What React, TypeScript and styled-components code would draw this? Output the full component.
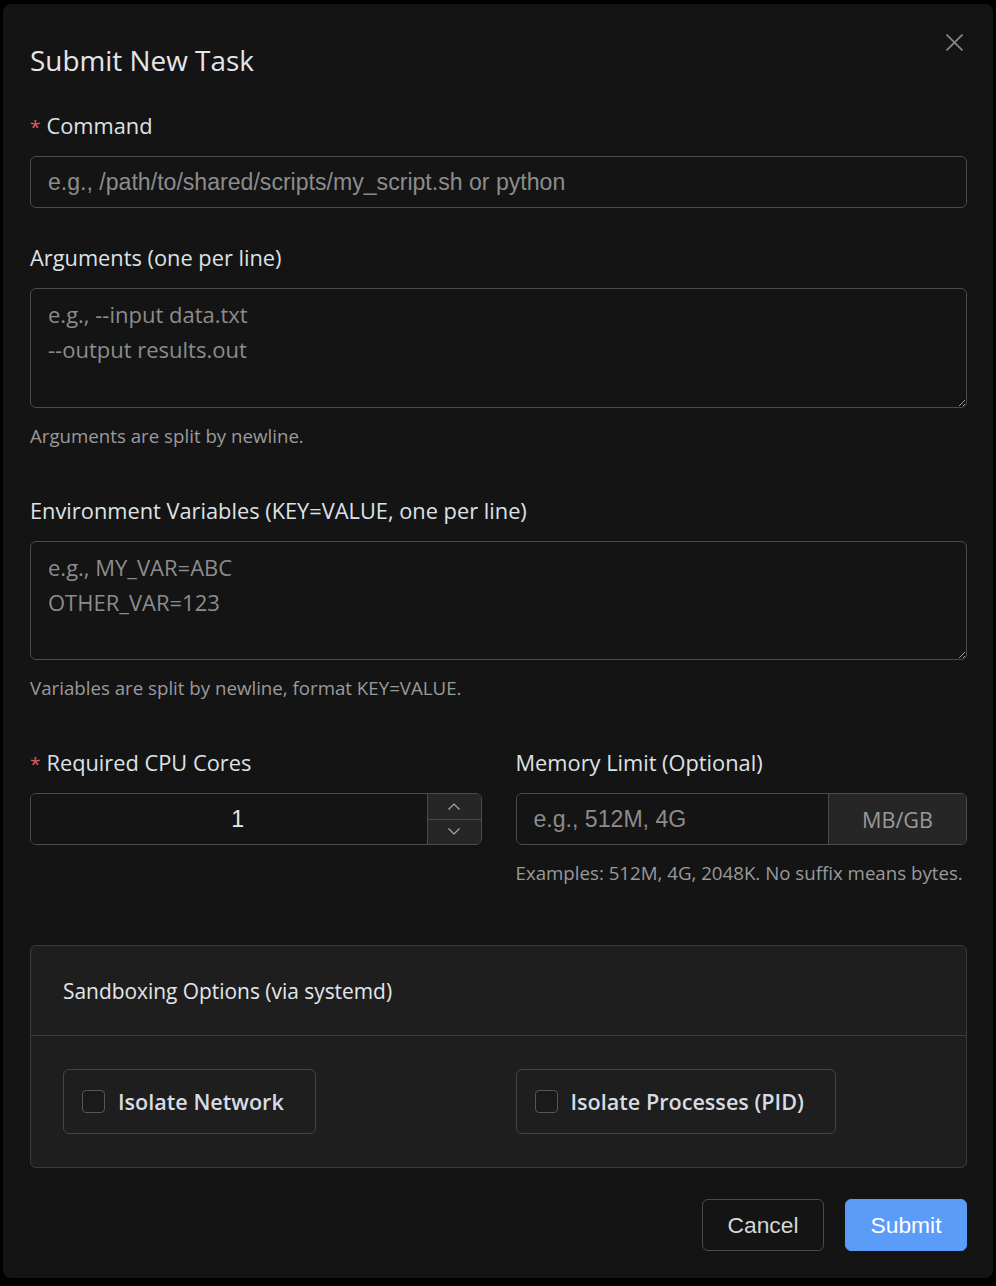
import React from "react";
import styled, { createGlobalStyle } from "styled-components";

const Global = createGlobalStyle`
  html, body { margin: 0; padding: 0; background: #000; }
  body { font-family: "Open Sans", "Noto Sans", sans-serif; }
  * { box-sizing: border-box; }
`;

const UI = `"Open Sans", "Noto Sans", sans-serif`;
const ARIAL = `"Liberation Sans", Arial, sans-serif`;

const Page = styled.div`
  width: 996px;
  height: 1286px;
  padding: 4px 3px 0 3px;
  background: #000;
`;

const Modal = styled.div`
  position: relative;
  width: 990px;
  height: 1274px;
  background: #141414;
  border-radius: 8px;
  padding: 0 26px 0 27px;
  display: flex;
  flex-direction: column;
`;

const Header = styled.div`
  height: 106px;
  display: flex;
  align-items: center;
  padding-top: 8px;
`;

const Title = styled.h2`
  margin: 0;
  font-family: ${UI};
  font-weight: 400;
  font-size: 27.9px;
  color: #e4e6ea;
  line-height: 1.2;
`;

const Close = styled.button`
  position: absolute;
  top: 26px;
  right: 27px;
  width: 24px;
  height: 24px;
  padding: 0;
  border: none;
  background: transparent;
  display: flex;
  align-items: center;
  justify-content: center;
  cursor: pointer;
`;

const Field = styled.div<{ $mb?: number }>`
  display: flex;
  flex-direction: column;
  min-width: 0;
  margin-bottom: ${(p) => p.$mb ?? 34}px;
`;

const Label = styled.label`
  font-family: ${UI};
  font-size: 21.8px;
  line-height: 32px;
  height: 32px;
  color: #dee2e6;
  margin-bottom: 14px;
  white-space: nowrap;
`;

const Req = styled.span`
  color: #e35d5d;
  margin-right: 6px;
  font-size: 19px;
`;

const TextInput = styled.input`
  height: 52px;
  width: 100%;
  background: #141414;
  border: 1.5px solid #4b4b4b;
  border-radius: 6px;
  padding: 0 17px;
  font-family: ${ARIAL};
  font-size: 23.1px;
  color: #e6e6e6;
  outline: none;
  &::placeholder { color: #8c8c8c; }
`;

const TextArea = styled.textarea<{ $h: number }>`
  height: ${(p) => p.$h}px;
  width: 100%;
  background: #141414;
  border: 1.5px solid #4b4b4b;
  border-radius: 6px;
  padding: 8px 17px;
  font-family: ${UI};
  font-size: 22px;
  line-height: 35px;
  color: #e6e6e6;
  outline: none;
  resize: vertical;
  &::placeholder { color: #8c8c8c; }
`;

const Help = styled.div`
  font-family: ${UI};
  font-size: 18.7px;
  line-height: 28px;
  color: #9a9a9a;
  margin-top: 14px;
  margin-bottom: 11px;
  white-space: nowrap;
`;

const Row = styled.div`
  display: grid;
  grid-template-columns: minmax(0, 1fr) minmax(0, 1fr);
  column-gap: 34px;
  margin-bottom: 47px;
  align-items: start;
`;

const Group = styled.div`
  display: flex;
  height: 52px;
  border: 1.5px solid #4b4b4b;
  border-radius: 6px;
  overflow: hidden;
`;

const GroupInput = styled.input<{ $center?: boolean }>`
  flex: 1;
  min-width: 0;
  background: #141414;
  border: none;
  padding: ${(p) => (p.$center ? "0 8px 0 26px" : "0 17px")};
  font-family: ${ARIAL};
  font-size: 23.1px;
  color: #e8e8e8;
  text-align: ${(p) => (p.$center ? "center" : "left")};
  outline: none;
  &::placeholder { color: #8c8c8c; }
`;

const Spinner = styled.div`
  width: 54px;
  display: flex;
  flex-direction: column;
  border-left: 1.5px solid #4b4b4b;
  background: #262626;
`;

const SpinBtn = styled.button<{ $top?: boolean }>`
  flex: 1;
  border: none;
  background: transparent;
  padding: 0;
  display: flex;
  align-items: center;
  justify-content: center;
  border-bottom: ${(p) => (p.$top ? "1.5px solid #4b4b4b" : "none")};
  cursor: pointer;
`;

const Addon = styled.div`
  width: 138px;
  display: flex;
  align-items: center;
  justify-content: center;
  background: #262626;
  border-left: 1.5px solid #4b4b4b;
  font-family: ${UI};
  font-size: 21.6px;
  color: #9a9a9a;
`;

const Card = styled.div`
  border: 1.5px solid #3c3c3c;
  border-radius: 6px;
  background: #1e1e1e;
  margin-bottom: 31px;
`;

const CardHeader = styled.div`
  height: 90px;
  display: flex;
  align-items: center;
  padding: 0 32px;
  border-bottom: 1.5px solid #3c3c3c;
  font-family: ${UI};
  font-size: 20.9px;
  color: #e4e6ea;
`;

const CardBody = styled.div`
  padding: 33px 32px;
  display: grid;
  grid-template-columns: minmax(0, 1fr) minmax(0, 1fr);
  column-gap: 34px;
`;

const Option = styled.label`
  justify-self: start;
  height: 65px;
  display: flex;
  align-items: center;
  gap: 13px;
  padding: 0 31px 0 18px;
  border: 1.5px solid #444;
  border-radius: 6px;
  cursor: pointer;
`;

const Box = styled.span`
  width: 23px;
  height: 23px;
  border: 1.5px solid #555;
  border-radius: 4px;
  background: #1a1a1a;
`;

const OptionText = styled.span`
  font-family: ${UI};
  font-weight: 600;
  font-size: 21.6px;
  color: #d9dbe2;
  white-space: nowrap;
`;

const Footer = styled.div`
  display: flex;
  justify-content: flex-end;
  gap: 21px;
`;

const Button = styled.button<{ $primary?: boolean }>`
  width: 122px;
  height: 52px;
  border-radius: 6px;
  border: 1.5px solid ${(p) => (p.$primary ? "#5b9cf9" : "#4b4b4b")};
  background: ${(p) => (p.$primary ? "#5b9cf9" : "#141414")};
  color: ${(p) => (p.$primary ? "#fff" : "#d6d6d6")};
  font-family: ${ARIAL};
  font-size: 22.8px;
  cursor: pointer;
`;

const Chevron = ({ up }: { up?: boolean }) => (
  <svg width="12" height="7" viewBox="0 0 12 7" fill="none">
    <path
      d={up ? "M0.5 6.5L6 1L11.5 6.5" : "M0.5 0.5L6 6L11.5 0.5"}
      stroke="#a8a8a8"
      strokeWidth="1.2"
    />
  </svg>
);

export default function App() {
  return (
    <Page>
      <Global />
      <Modal>
        <Header>
          <Title>Submit New Task</Title>
        </Header>
        <Close aria-label="Close">
          <svg width="17" height="17" viewBox="0 0 17 17">
            <path d="M0.5 0.5L16.5 16.5M16.5 0.5L0.5 16.5" stroke="#8a8a8a" strokeWidth="1.6" />
          </svg>
        </Close>

        <Field>
          <Label>
            <Req>*</Req>Command
          </Label>
          <TextInput placeholder="e.g., /path/to/shared/scripts/my_script.sh or python" />
        </Field>

        <Field $mb={34}>
          <Label>Arguments (one per line)</Label>
          <TextArea $h={120} placeholder={"e.g., --input data.txt\n--output results.out"} />
          <Help>Arguments are split by newline.</Help>
        </Field>

        <Field $mb={34}>
          <Label>Environment Variables (KEY=VALUE, one per line)</Label>
          <TextArea $h={119} placeholder={"e.g., MY_VAR=ABC\nOTHER_VAR=123"} />
          <Help>Variables are split by newline, format KEY=VALUE.</Help>
        </Field>

        <Row>
          <Field $mb={0}>
            <Label>
              <Req>*</Req>Required CPU Cores
            </Label>
            <Group>
              <GroupInput $center defaultValue="1" />
              <Spinner>
                <SpinBtn $top aria-label="Increase">
                  <Chevron up />
                </SpinBtn>
                <SpinBtn aria-label="Decrease">
                  <Chevron />
                </SpinBtn>
              </Spinner>
            </Group>
          </Field>
          <Field $mb={0}>
            <Label>Memory Limit (Optional)</Label>
            <Group>
              <GroupInput placeholder="e.g., 512M, 4G" />
              <Addon>MB/GB</Addon>
            </Group>
            <Help>Examples: 512M, 4G, 2048K. No suffix means bytes.</Help>
          </Field>
        </Row>

        <Card>
          <CardHeader>Sandboxing Options (via systemd)</CardHeader>
          <CardBody>
            <Option>
              <Box />
              <OptionText>Isolate Network</OptionText>
            </Option>
            <Option>
              <Box />
              <OptionText>Isolate Processes (PID)</OptionText>
            </Option>
          </CardBody>
        </Card>

        <Footer>
          <Button>Cancel</Button>
          <Button $primary>Submit</Button>
        </Footer>
      </Modal>
    </Page>
  );
}
